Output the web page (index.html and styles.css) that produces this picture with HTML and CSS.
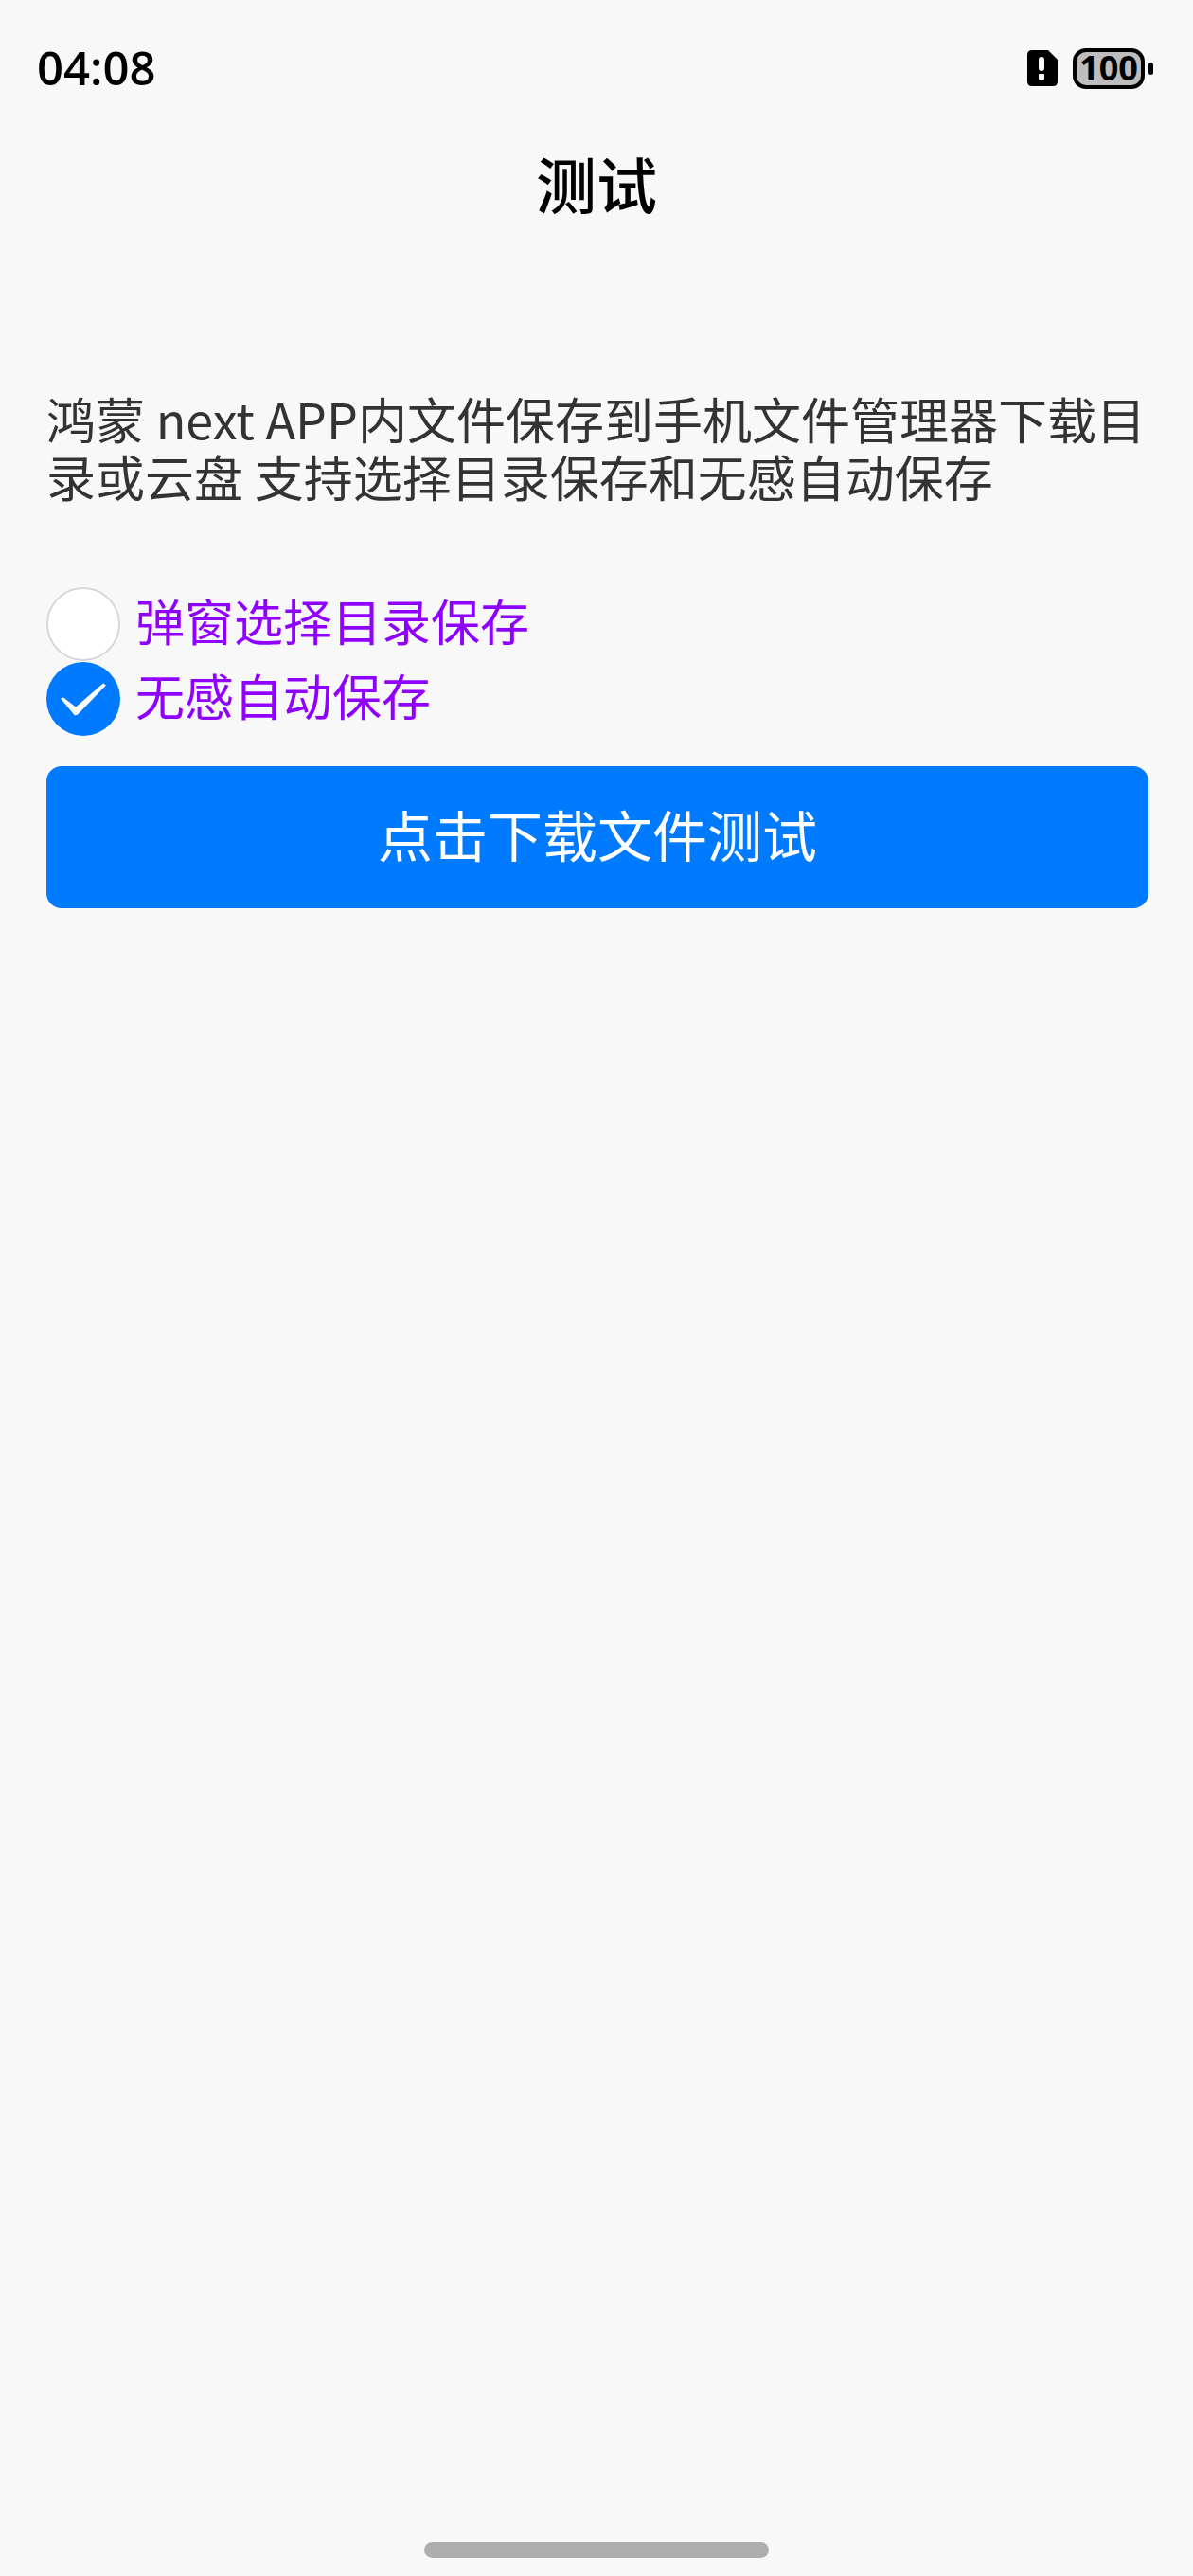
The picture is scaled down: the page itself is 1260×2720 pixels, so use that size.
FILE: index.html
```
<!DOCTYPE html>
<html lang="zh-CN">
<head>
  <meta charset="UTF-8" />
  <meta name="viewport" content="width=device-width, initial-scale=1.0"/>
  <title>测试</title>
  <link rel="stylesheet" href="styles.css">
</head>
<body>
  <div class="status-bar">
    <span class="time">04:08</span>
    <div class="status-icons">
      <svg class="sim" viewBox="0 0 32 38" width="32" height="38" aria-hidden="true">
        <path d="M5 0H22L32 10V33Q32 38 27 38H5Q0 38 0 33V5Q0 0 5 0Z" fill="#000"/>
        <rect x="12" y="7" width="6" height="15" rx="3" fill="#f8f8f8"/>
        <rect x="12" y="25" width="6" height="6" rx="1" fill="#f8f8f8"/>
      </svg>
      <div class="battery">
        <span class="battery-level">100</span>
        <span class="battery-tip"></span>
      </div>
    </div>
  </div>

  <header>
    <h1>测试</h1>
  </header>

  <main>
    <p class="intro">鸿蒙 next APP内文件保存到手机文件管理器下载目录或云盘 支持选择目录保存和无感自动保存</p>

    <form class="save-form">
      <div class="option">
        <input type="radio" name="mode" id="mode-dialog" value="dialog">
        <label for="mode-dialog">弹窗选择目录保存</label>
      </div>
      <div class="option">
        <input type="radio" name="mode" id="mode-auto" value="auto" checked>
        <label for="mode-auto">无感自动保存</label>
      </div>
      <button type="button" class="download-btn">点击下载文件测试</button>
    </form>
  </main>

  <div class="home-bar"></div>
</body>
</html>
```

FILE: styles.css
```
* {
  box-sizing: border-box;
}
body {
  margin: 0;
  min-height: 100vh;
  display: flex;
  flex-direction: column;
  background-color: #f8f8f8;
  color: #000;
  font-family: "Noto Sans CJK SC", sans-serif;
}

/* status bar */
.status-bar {
  display: flex;
  justify-content: space-between;
  align-items: center;
  height: 144px;
  padding: 0 42px 0 39px;
}
.time {
  padding-bottom: 2px;
  font-family: "Open Sans", sans-serif;
  font-size: 49px;
  font-weight: 600;
  line-height: 60px;
}
.status-icons {
  display: flex;
  align-items: center;
  gap: 16px;
}
.battery {
  display: flex;
  align-items: center;
  gap: 4px;
}
.battery-level {
  display: flex;
  align-items: center;
  justify-content: center;
  width: 76px;
  height: 43px;
  border: 4px solid #000;
  border-radius: 14px;
  background-color: #bdbdbd;
  font-family: "Noto Sans", sans-serif;
  font-size: 36px;
  font-weight: 700;
  line-height: 36px;
}
.battery-tip {
  width: 5px;
  height: 13px;
  border-radius: 3px;
  background-color: #000;
}

/* title */
header {
  display: flex;
  align-items: center;
  justify-content: center;
  height: 96px;
}
h1 {
  margin: 0;
  font-size: 64px;
  font-weight: 500;
  line-height: 64px;
}

/* content */
main {
  padding: 171px 47px 0 49px;
}
.intro {
  margin: 0;
  font-size: 52px;
  line-height: 61px;
  color: #333;
}
.save-form {
  margin-top: 86px;
}
.option {
  display: flex;
  align-items: center;
  gap: 16px;
  height: 79px;
}
.option input {
  appearance: none;
  flex: none;
  width: 78px;
  height: 78px;
  margin: 0;
  border: 2px solid #d8d8d8;
  border-radius: 50%;
  background-color: #fff;
}
.option input:checked {
  border: none;
  background-color: #007aff;
}
.option input:checked::after {
  content: "";
  display: block;
  width: 78px;
  height: 78px;
  background-color: #fff;
  clip-path: polygon(15px 39px, 18px 38px, 31px 48px, 60px 23px, 63px 25px, 33px 56px, 30px 57px);
}
.option label {
  padding-bottom: 8px;
  font-size: 52px;
  line-height: 60px;
  color: #8f00ff;
}
.download-btn {
  display: block;
  width: 100%;
  height: 150px;
  margin-top: 32px;
  padding: 0 0 8px;
  border: none;
  border-radius: 16px;
  background-color: #007aff;
  color: #fff;
  font-family: inherit;
  font-size: 58px;
  line-height: 64px;
}

.home-bar {
  width: 364px;
  height: 17px;
  margin: auto auto 19px;
  border-radius: 9px;
  background-color: #aeaeae;
}
```
